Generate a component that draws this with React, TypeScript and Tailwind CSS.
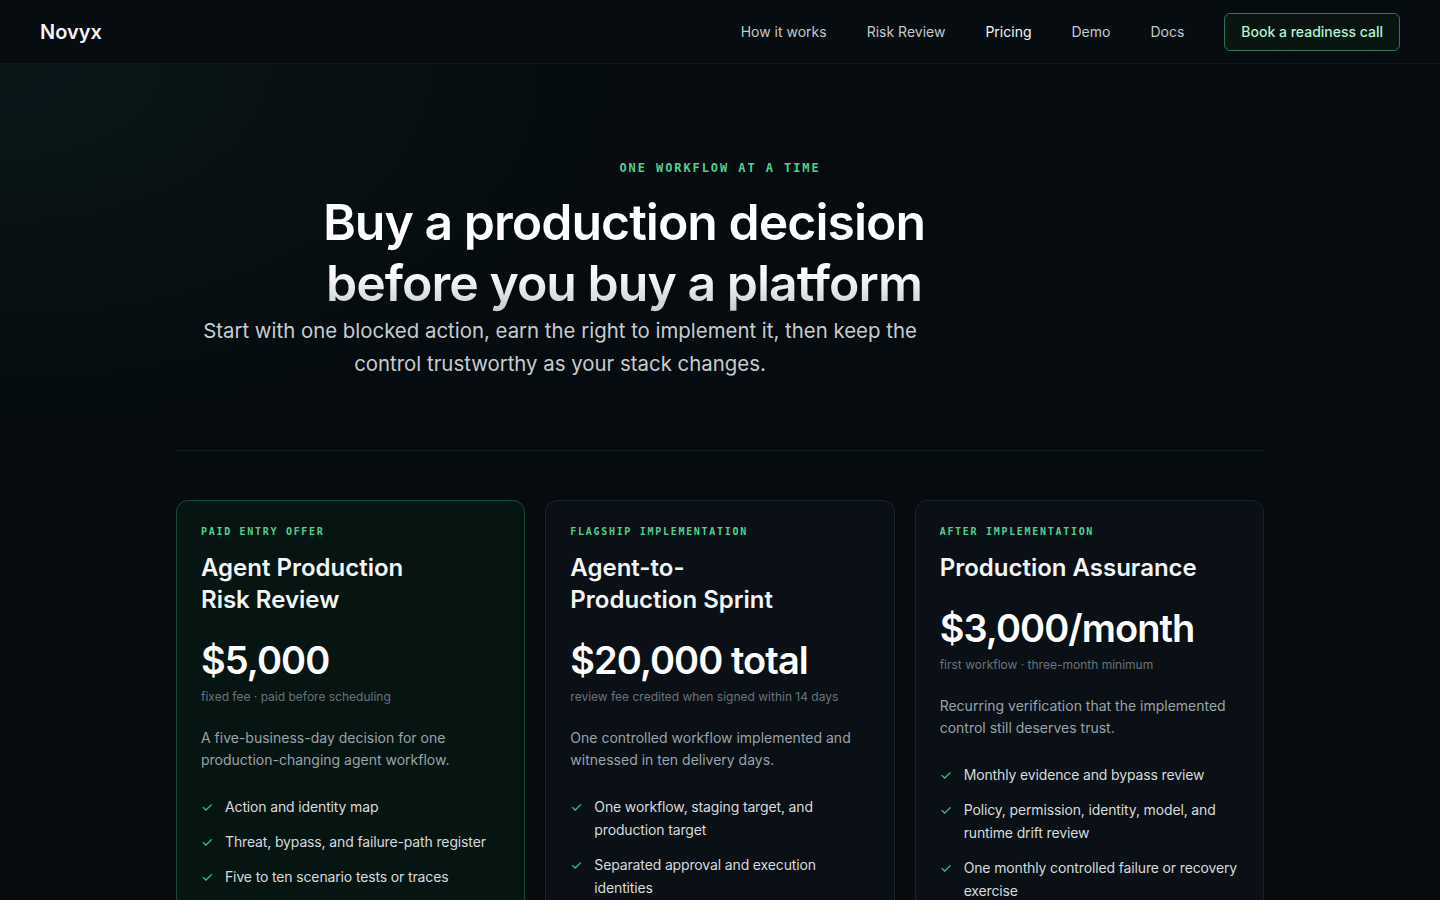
import React from "react";

type Plan = {
  eyebrow: string;
  title: React.ReactNode;
  price: string;
  note: string;
  desc: string;
  features: string[];
  featured?: boolean;
};

const plans: Plan[] = [
  {
    eyebrow: "PAID ENTRY OFFER",
    title: (
      <>
        Agent Production
        <br />
        Risk Review
      </>
    ),
    price: "$5,000",
    note: "fixed fee · paid before scheduling",
    desc: "A five-business-day decision for one production-changing agent workflow.",
    features: [
      "Action and identity map",
      "Threat, bypass, and failure-path register",
      "Five to ten scenario tests or traces",
      "Go, no-go, or conditional production decision",
    ],
    featured: true,
  },
  {
    eyebrow: "FLAGSHIP IMPLEMENTATION",
    title: (
      <>
        Agent-to-
        <br />
        Production Sprint
      </>
    ),
    price: "$20,000 total",
    note: "review fee credited when signed within 14 days",
    desc: "One controlled workflow implemented and witnessed in ten delivery days.",
    features: [
      "One workflow, staging target, and production target",
      "Separated approval and execution identities",
      "Witnessed failure and recovery tests",
    ],
  },
  {
    eyebrow: "AFTER IMPLEMENTATION",
    title: <>Production Assurance</>,
    price: "$3,000/month",
    note: "first workflow · three-month minimum",
    desc: "Recurring verification that the implemented control still deserves trust.",
    features: [
      "Monthly evidence and bypass review",
      "Policy, permission, identity, model, and runtime drift review",
      "One monthly controlled failure or recovery exercise",
    ],
  },
];

function Card({ plan }: { plan: Plan }) {
  return (
    <div
      className={
        plan.featured
          ? "rounded-xl border border-[#1c4a38] bg-[#061512] px-6 pt-[25px] pb-8"
          : "rounded-xl border border-[#1b232a] bg-[#0a1015] px-6 pt-[25px] pb-8"
      }
    >
      <div className="font-['DejaVu_Sans_Mono',monospace] text-[10px] leading-3 font-semibold tracking-[0.17em] text-[#4fd08f]">
        {plan.eyebrow}
      </div>
      <h3 className="mt-3.5 text-[24px] leading-8 font-semibold text-[#f3f5f6]">
        {plan.title}
      </h3>
      <div className="mt-5 text-[38px] leading-[48px] font-semibold tracking-[-0.025em] text-white">
        {plan.price}
      </div>
      <div className="mt-[5px] text-[12px] leading-4 text-[#6a737c]">{plan.note}</div>
      <p className="mt-[22px] text-[14px] leading-[22px] text-[#9aa2aa]">{plan.desc}</p>
      <ul className="mt-6 flex flex-col gap-3">
        {plan.features.map((f) => (
          <li
            key={f}
            className="flex gap-3 text-[14px] leading-[23px] tracking-[-0.01em] text-[#d6dadd]"
          >
            <span className="w-3 shrink-0 text-[14px] text-[#3fbf80]">✓</span>
            <span>{f}</span>
          </li>
        ))}
      </ul>
    </div>
  );
}

export default function App() {
  return (
    <div className="min-h-screen bg-[#050b0f] font-['Inter','Noto_Sans',sans-serif] text-white">
      <header className="flex h-16 items-center justify-between border-b border-[#0f1a1e] bg-[#060c10] px-10">
        <div className="text-[20px] font-semibold text-[#f2f4f5]">Novyx</div>
        <nav className="flex items-center gap-10 text-[14px]">
          <a className="text-[#c4c8cc]">How it works</a>
          <a className="text-[#c4c8cc]">Risk Review</a>
          <a className="text-[#f2f4f5]">Pricing</a>
          <a className="text-[#c4c8cc]">Demo</a>
          <a className="text-[#c4c8cc]">Docs</a>
          <a className="rounded-md border border-[#2b7a57] bg-[#07140f] px-4 py-2 font-medium leading-5 text-[#b7f0d2]">
            Book a readiness call
          </a>
        </nav>
      </header>

      <main className="bg-[radial-gradient(ellipse_60%_55%_at_0%_0%,#0a1719_0%,transparent_75%)]">
        <div className="mx-auto max-w-[1088px]">
          <section className="pt-24 pb-[70px]">
            <div className="text-center font-['DejaVu_Sans_Mono',monospace] text-[12px] leading-4 font-semibold tracking-[0.16em] text-[#4fd08f]">
              ONE WORKFLOW AT A TIME
            </div>
            <h1 className="mt-4 max-w-[896px] bg-gradient-to-b from-white from-65% to-[#c3c8cc] bg-clip-text text-center text-[50px] leading-[61px] font-semibold tracking-[-0.02em] text-transparent">
              Buy a production decision
              <br />
              before you buy a platform
            </h1>
            <p className="max-w-[768px] text-center text-[20.4px] leading-[33px] text-[#c6cbd0]">
              Start with one blocked action, earn the right to implement it, then keep the control
              trustworthy as your stack changes.
            </p>
          </section>
          <section className="border-t border-[#141d22] pt-[49px]">
            <div className="grid grid-cols-3 gap-5">
              {plans.map((p, i) => (
                <Card key={i} plan={p} />
              ))}
            </div>
          </section>
        </div>
      </main>
    </div>
  );
}
